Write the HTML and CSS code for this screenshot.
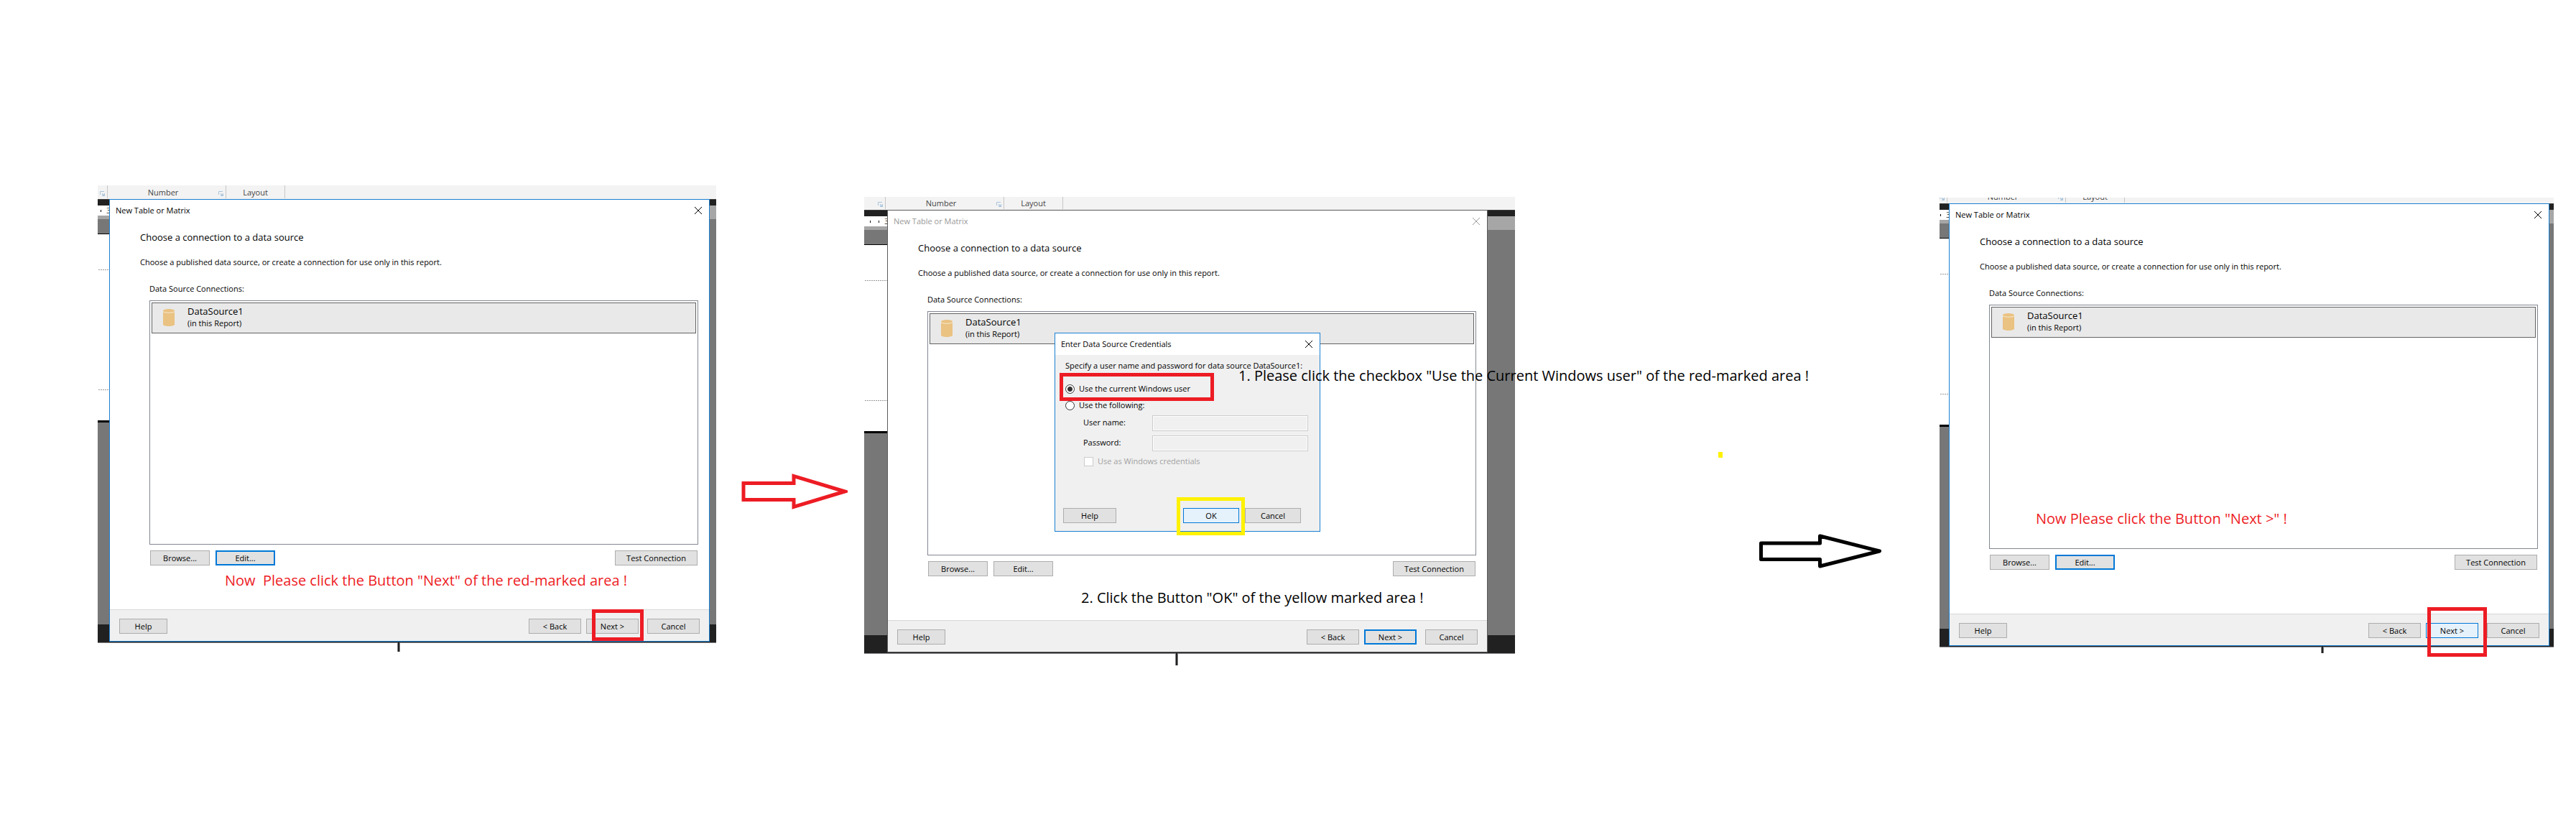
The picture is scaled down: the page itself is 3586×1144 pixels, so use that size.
FILE: index.html
```
<!DOCTYPE html>
<html lang="en">
<head>
<meta charset="utf-8">
<title>New Table or Matrix: connecting a data source</title>
<link rel="stylesheet" href="styles.css">
</head>
<body>
<svg class="symbols" aria-hidden="true">
  <symbol id="close" viewBox="0 0 10 10"><path d="M0 0L10 10M10 0L0 10" fill="none" stroke="currentColor"/></symbol>
  <symbol id="launcher" viewBox="0 0 7 7"><path d="M0.5 5V0.5H6" fill="none" stroke="#a9c4dc"/><path d="M7 3V7H3V6H4.5L2.5 4L3.5 3L6 5V3Z" fill="#a9c4dc"/></symbol>
  <symbol id="database" viewBox="0 0 16 24"><path d="M0 3V21.500C0 22.900 3.600 24 8 24S16 22.900 16 21.500V3Z" fill="#eac282"/><ellipse cx="8" cy="2.500" rx="8" ry="2.500" fill="#eac282"/><path d="M0 3.500C1 5.800 15 5.800 16 3.500" fill="none" stroke="#f7ead2"/></symbol>
</svg>
<main class="steps">

  <section class="shot shot-first">
    <div class="ribbon">
      <div class="group group-cut"><svg class="launcher"><use href="#launcher"/></svg></div>
      <div class="group group-number"><span class="group-name">Number</span><svg class="launcher"><use href="#launcher"/></svg></div>
      <div class="group group-layout"><span class="group-name">Layout</span></div>
    </div>
    <div class="stage">
      <div class="gutter gutter-left"><div class="ruler"><i></i><span>3</span></div></div>
      <div class="dialog">
        <header class="titlebar"><h2>New Table or Matrix</h2><button class="close" aria-label="Close"><svg><use href="#close"/></svg></button></header>
        <div class="content">
          <h3>Choose a connection to a data source</h3>
          <p class="intro">Choose a published data source, or create a connection for use only in this report.</p>
          <p class="list-label" id="sources-1">Data Source Connections:</p>
          <ul class="sources" aria-labelledby="sources-1">
            <li class="source"><svg class="db"><use href="#database"/></svg><div><strong>DataSource1</strong><small>(in this Report)</small></div></li>
          </ul>
          <div class="actions"><button class="btn wide">Browse...</button><button class="btn wide default">Edit...</button><button class="btn test">Test Connection</button></div>
        </div>
        <footer class="footer"><button class="btn help">Help</button><button class="btn back">&lt; Back</button><button class="btn next">Next &gt;</button><button class="btn cancel">Cancel</button></footer>
        <div class="mark mark-next"></div>
        <p class="note note-red note-next">Now&nbsp; Please click the Button "Next" of the red-marked area !</p>
      </div>
      <div class="gutter gutter-right"></div>
      <div class="stem"></div>
    </div>
  </section>

  <div class="connector connector-first">
    <svg class="arrow arrow-red" viewBox="0 0 148 50"><path d="M3 13.500H73V3.500L144 25L73 46.500V36.500H3Z" fill="none" stroke="#ed1c24" stroke-width="5"/></svg>
  </div>

  <section class="shot shot-second">
    <div class="ribbon">
      <div class="group group-cut"><svg class="launcher"><use href="#launcher"/></svg></div>
      <div class="group group-number"><span class="group-name">Number</span><svg class="launcher"><use href="#launcher"/></svg></div>
      <div class="group group-layout"><span class="group-name">Layout</span></div>
    </div>
    <div class="stage">
      <div class="gutter gutter-left"><div class="ruler"><i></i><i></i><span>3</span></div></div>
      <div class="dialog inactive">
        <header class="titlebar"><h2>New Table or Matrix</h2><button class="close" aria-label="Close"><svg><use href="#close"/></svg></button></header>
        <div class="content">
          <h3>Choose a connection to a data source</h3>
          <p class="intro">Choose a published data source, or create a connection for use only in this report.</p>
          <p class="list-label" id="sources-2">Data Source Connections:</p>
          <ul class="sources" aria-labelledby="sources-2">
            <li class="source"><svg class="db"><use href="#database"/></svg><div><strong>DataSource1</strong><small>(in this Report)</small></div></li>
          </ul>
          <div class="actions"><button class="btn wide">Browse...</button><button class="btn wide">Edit...</button><button class="btn test">Test Connection</button></div>
        </div>
        <footer class="footer"><button class="btn help">Help</button><button class="btn back">&lt; Back</button><button class="btn next default">Next &gt;</button><button class="btn cancel">Cancel</button></footer>

        <form class="popup">
          <header class="titlebar"><h2>Enter Data Source Credentials</h2><button type="button" class="close" aria-label="Close"><svg><use href="#close"/></svg></button></header>
          <div class="popup-body">
            <p>Specify a user name and password for data source DataSource1:</p>
            <label class="choice choice-current"><input type="radio" name="login" checked>Use the current Windows user</label>
            <label class="choice choice-following"><input type="radio" name="login">Use the following:</label>
            <div class="field"><label for="user">User name:</label><input id="user" type="text" disabled></div>
            <div class="field"><label for="pass">Password:</label><input id="pass" type="password" disabled></div>
            <label class="choice choice-windows"><input type="checkbox" disabled>Use as Windows credentials</label>
            <div class="popup-actions"><button type="button" class="btn popup-help">Help</button><button type="button" class="btn popup-btn hot">OK</button><button type="button" class="btn popup-btn">Cancel</button></div>
          </div>
          <div class="mark mark-user"></div>
          <div class="mark mark-ok"></div>
        </form>
        <p class="note note-user">1. Please click the checkbox "Use the Current Windows user" of the red-marked area !</p>
        <p class="note note-ok">2. Click the Button "OK" of the yellow marked area !</p>
      </div>
      <div class="gutter gutter-right"></div>
      <div class="stem"></div>
    </div>
  </section>

  <div class="connector connector-second">
    <span class="dot"></span>
    <svg class="arrow arrow-black" viewBox="0 0 170 50"><path d="M2.500 14H84.500V4L167.500 25L84.500 46V36.500H2.500Z" fill="none" stroke="#000" stroke-width="5" stroke-linejoin="round"/></svg>
  </div>

  <section class="shot shot-third">
    <div class="ribbon">
      <div class="group group-cut"><svg class="launcher"><use href="#launcher"/></svg></div>
      <div class="group group-number"><span class="group-name">Number</span><svg class="launcher"><use href="#launcher"/></svg></div>
      <div class="group group-layout"><span class="group-name">Layout</span></div>
    </div>
    <div class="stage">
      <div class="gutter gutter-left"><div class="ruler"><i></i><span>3</span></div></div>
      <div class="dialog">
        <header class="titlebar"><h2>New Table or Matrix</h2><button class="close" aria-label="Close"><svg><use href="#close"/></svg></button></header>
        <div class="content">
          <h3>Choose a connection to a data source</h3>
          <p class="intro">Choose a published data source, or create a connection for use only in this report.</p>
          <p class="list-label" id="sources-3">Data Source Connections:</p>
          <ul class="sources" aria-labelledby="sources-3">
            <li class="source"><svg class="db"><use href="#database"/></svg><div><strong>DataSource1</strong><small>(in this Report)</small></div></li>
          </ul>
          <div class="actions"><button class="btn wide">Browse...</button><button class="btn wide default">Edit...</button><button class="btn test">Test Connection</button></div>
        </div>
        <footer class="footer"><button class="btn help">Help</button><button class="btn back">&lt; Back</button><button class="btn next hot">Next &gt;</button><button class="btn cancel">Cancel</button></footer>
        <div class="mark mark-last"></div>
        <p class="note note-red note-last">Now Please click the Button "Next &gt;" !</p>
      </div>
      <div class="gutter gutter-right"></div>
      <div class="stem"></div>
    </div>
  </section>
</main>
</body>
</html>
```
FILE: styles.css
```
* { box-sizing: border-box; }

body {
  margin: 0;
  background: #fff;
  color: #000;
  font: 11px/16px "Open Sans", "Noto Sans", sans-serif;
}

h2, h3, p, ul { margin: 0; padding: 0; font-weight: 400; }
ul { list-style: none; }
svg { display: block; }
.symbols { position: absolute; width: 0; height: 0; }

.steps {
  display: grid;
  grid-template-columns: 861fr 206fr 906fr 591fr 855fr;
  align-items: start;
  min-height: 100vh;
  padding: 258px 31px 0 136px;
}

/* Captured windows */
.shot-first { --left: 16px; --right: 9px; --ribbon: 19px; --stem: 401px; --stem-height: 12px; }
.shot-second { --left: 32px; --right: 38px; --ribbon: 18px; --stem: 401px; --stem-height: 16px; margin-top: 16px; }
.shot-third { --left: 13px; --right: 6px; --ribbon: 8px; --stem: 518px; --stem-height: 8px; margin-top: 17px; }

.ribbon {
  display: flex;
  align-items: flex-end;
  height: var(--ribbon);
  overflow: hidden;
  background: #f3f3f3;
  color: #444;
}
.group {
  display: flex;
  align-items: flex-end;
  height: 18px;
  padding-right: 3px;
  margin-bottom: 1px;
  border-right: 1px solid #c6c6c6;
}
.group-cut { width: calc(var(--left) - 2px); justify-content: flex-end; }
.group-number { width: 165px; }
.group-layout { width: 82px; padding-right: 0; }
.group-name { flex: 1; text-align: center; }
.launcher { flex: none; width: 7px; height: 7px; margin-bottom: 3px; }

.stage {
  position: relative;
  display: grid;
  grid-template-columns: var(--left) 1fr var(--right);
  align-items: start;
  padding-bottom: 2px;
  background: linear-gradient(#3f3f3f 1px, #212121 1px calc(100% - 1px), #85858a calc(100% - 1px));
}
.gutter { height: 100%; }
.gutter-left {
  overflow: hidden;
  padding-top: 9px;
  background:
    repeating-linear-gradient(90deg, #999 0 2px, transparent 2px 3px) 1px 98px / 100% 1px no-repeat,
    repeating-linear-gradient(90deg, #999 0 2px, transparent 2px 3px) 1px 265px / 100% 1px no-repeat,
    linear-gradient(transparent 9px, #fff 9px 23px, #a6a6a6 23px 28px, #777 28px 48px, #000 48px 49px, #fff 49px 308px, #000 308px 311px, #777 311px 592px, transparent 592px);
}
.gutter-right {
  background: linear-gradient(transparent 9px, #a6a6a6 9px 28px, #777 28px 592px, transparent 592px);
}
.ruler { display: flex; justify-content: flex-end; align-items: center; height: 14px; margin-right: -2px; }
.ruler i { flex: none; width: 1px; height: 3px; margin-right: 11px; background: #000; }
.ruler span { flex: none; width: 6px; margin-left: -4px; color: #444; }
.stem {
  position: absolute;
  top: calc(100% - 1px);
  left: calc(var(--left) + var(--stem));
  width: 4px;
  height: calc(var(--stem-height) + 1px);
  border: solid #85858a;
  border-width: 0 1px;
  background: #212121;
}

/* Dialog */
.dialog { position: relative; border: 1px solid #1a80d2; background: #fff; }
.dialog.inactive { border-color: #5a5a5a; }
.titlebar { display: flex; align-items: center; justify-content: space-between; height: 30px; padding: 0 10px 0 8px; background: #fff; }
.titlebar h2 { font-size: 11px; line-height: 16px; }
.inactive > .titlebar { color: #999; }
.close { display: block; padding: 0; border: 0; background: none; color: inherit; }
.close svg { width: 10px; height: 10px; }

.content { padding: 12px 15px 61px 42px; }
.content h3 { font-size: 13px; line-height: 20px; }
.intro { margin-top: 17px; }
.list-label { margin: 21px 0 8px 13px; }
.sources { min-height: 340px; margin-left: 13px; padding: 2px; border: 1px solid #828790; }
.source { display: flex; height: 43px; padding: 2px 15px; border: 1px solid #636363; background: #e9e9e9; }
.db { width: 16px; height: 24px; margin: 6px 18px 0 0; }
.source strong, .source small { display: block; font-weight: 400; }
.source strong { font-size: 13px; line-height: 18px; }
.source small { font-size: 11px; line-height: 16px; }

.btn {
  height: 21px;
  padding: 0;
  border: 1px solid #adadad;
  background: #e1e1e1;
  color: #000;
  font: inherit;
  line-height: 16px;
}
.btn.default { border: 2px solid #0078d7; }
.btn.hot { border-color: #0078d7; background: #e5f1fb; }
.actions { display: flex; gap: 8px; margin: 8px 1px 0 14px; }
.wide { width: 83px; }
.test { width: 115px; margin-left: auto; }

.footer { display: flex; padding: 12px 13px 10px; border-top: 1px solid #d8d8d8; background: #f0f0f0; }
.help { width: 67px; }
.back, .next, .cancel { width: 73px; }
.back { margin-left: auto; }
.next { margin: 0 12px 0 7px; }

/* Credentials popup, floating over the dialog */
.popup { position: absolute; top: 170px; left: 232px; width: 370px; border: 1px solid #1a80d2; background: #f0f0f0; }
.popup-body { padding: 7px 16px 11px 14px; }
.choice { display: flex; align-items: center; gap: 6px; width: max-content; height: 16px; }
.choice input { flex: none; width: 13px; height: 13px; margin: 0; appearance: none; border: 1px solid #333; background: #fff; }
.choice input[type="radio"] { border-radius: 50%; }
.choice input[type="radio"]:checked { background: radial-gradient(circle, #333 3px, #fff 4px); }
.choice-current { margin-top: 16px; }
.choice-following { margin-top: 7px; }
.choice-windows { margin: 6px 0 57px 26px; color: #a0a0a0; }
.choice-windows input { border-color: #ccc; }
.field { display: flex; margin: 6px 0 0 25px; }
.field label { width: 96px; padding-top: 2px; }
.field input { flex: 1; min-width: 0; height: 22px; padding: 0 4px; border: 1px solid #ccc; box-shadow: inset 0 0 0 1px #fff; background: #f0f0f0; font: inherit; }
.popup-actions { display: flex; gap: 8px; margin: 0 10px 0 -3px; }
.popup-help { width: 74px; margin-right: auto; }
.popup-btn { width: 78px; }

/* Hand-drawn marks and notes */
.mark { position: absolute; border: 5px solid #ed1c24; pointer-events: none; }
.mark-next { top: 570px; right: 91px; width: 72px; height: 44px; }
.mark-last { top: 561px; right: 86px; width: 83px; height: 69px; }
.mark-user { top: 55px; left: 6px; width: 215px; height: 39px; }
.mark-ok { top: 228px; right: 104px; width: 95px; height: 53px; border-color: #fff200; }

.note { position: absolute; z-index: 1; font-size: 20px; line-height: 28px; white-space: nowrap; }
.note-red { color: #ed1c24; }
.note-next { top: 516px; left: 160px; }
.note-user { top: 216px; left: 488px; }
.note-ok { top: 525px; left: 269px; }
.note-last { top: 424px; left: 120px; }

/* Arrows between the steps */
.connector { display: flex; justify-content: flex-end; align-items: flex-start; }
.connector-first { padding: 401px 23px 0 0; }
.connector-second { gap: 51px; padding: 371px 81px 0 0; }
.arrow { flex: none; height: 50px; }
.arrow-red { width: 148px; }
.arrow-black { width: 170px; margin-top: 113px; }
.dot { width: 6px; height: 8px; background: #fff200; }
```
